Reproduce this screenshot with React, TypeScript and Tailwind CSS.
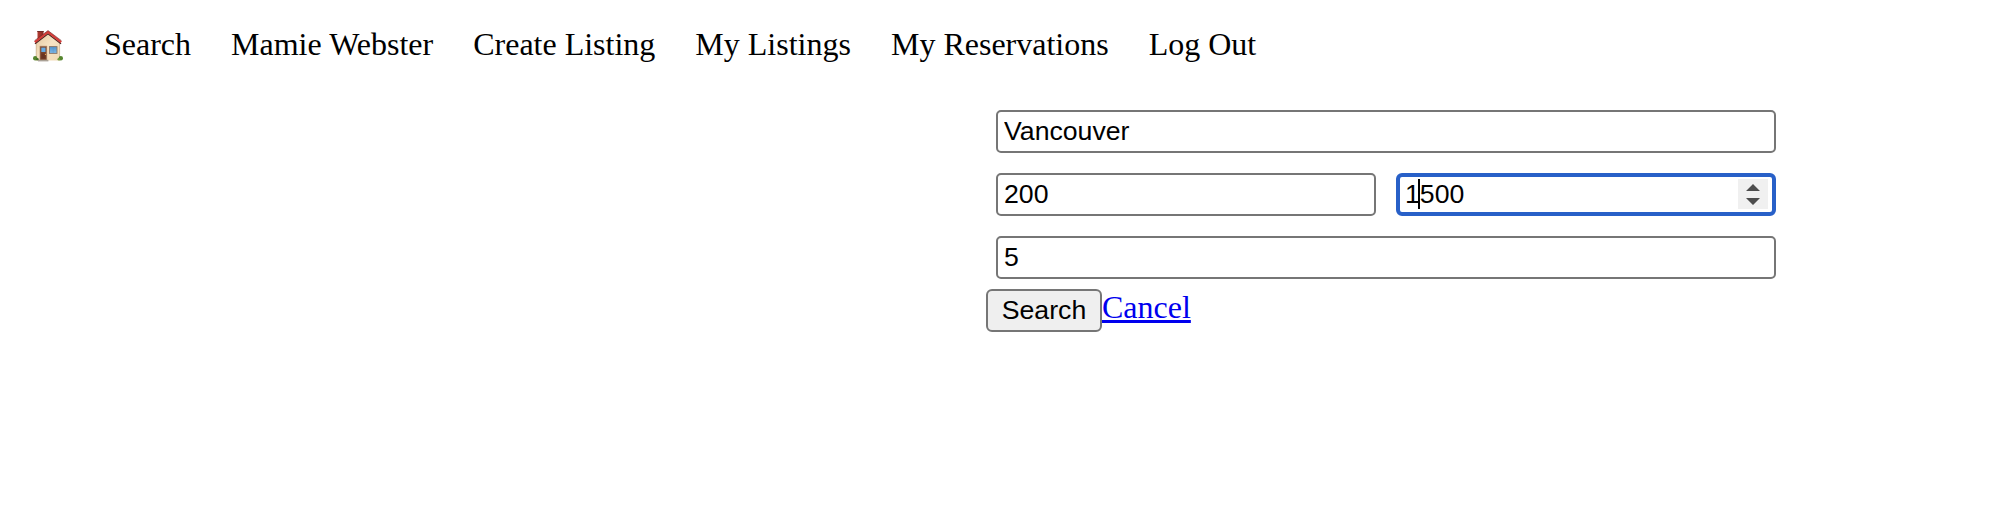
const navItems = [
  'Search',
  'Mamie Webster',
  'Create Listing',
  'My Listings',
  'My Reservations',
  'Log Out',
];

function HouseIcon() {
  return (
    <svg className="block h-9 w-8" viewBox="12 8 32 36" aria-label="Home">
      <defs>
        <linearGradient id="wall" x1="0" x2="1" y1="0" y2="1">
          <stop offset="0" stopColor="#e3c69c" />
          <stop offset="0.5" stopColor="#f7e3c4" />
          <stop offset="1" stopColor="#f0d9b4" />
        </linearGradient>
        <linearGradient id="brick" x1="0" x2="1">
          <stop offset="0" stopColor="#b53b31" />
          <stop offset="1" stopColor="#842a24" />
        </linearGradient>
        <linearGradient id="glass" x1="0" x2="0" y1="0" y2="1">
          <stop offset="0" stopColor="#4f93cf" />
          <stop offset="1" stopColor="#7fb9e6" />
        </linearGradient>
      </defs>
      <rect x="17.5" y="11" width="6" height="9.5" fill="url(#brick)" />
      <rect x="17.3" y="11" width="6.4" height="1" fill="#6d2a26" />
      <path d="M16 22 28 13 39.8 22v18.6H16z" fill="url(#wall)" />
      <path d="M16.2 23v17.6M39.6 23v17.6" stroke="#bfa381" strokeWidth=".6" />
      <path d="M15 23.8 28 13.8 41 23.8" fill="none" stroke="#4a2522" strokeWidth="1.3" />
      <path d="M14.8 22.2 28 12 41.2 22.2" fill="none" stroke="#d63c38" strokeWidth="2.2" />
      <path d="M14.6 20.6 28 10.6 41.4 20.6" fill="none" stroke="#6b2a28" strokeWidth=".6" />
      <circle cx="15.2" cy="38.2" r="2.2" fill="#56862f" />
      <circle cx="17.4" cy="39.2" r="1.3" fill="#3f6d22" />
      <circle cx="40.8" cy="38.2" r="2.2" fill="#56862f" />
      <circle cx="38.8" cy="39.2" r="1.3" fill="#6f9d3d" />
      <rect x="20" y="26.2" width="6.8" height="13.8" fill="#79432c" stroke="#a98260" strokeWidth=".7" />
      <rect x="21.3" y="27.6" width="4.2" height="4.4" fill="#62abe6" />
      <rect x="21.4" y="33.6" width="4" height="5" fill="#6a3522" />
      <circle cx="25.5" cy="34.4" r=".7" fill="#e3a44d" />
      <rect x="29.4" y="26.6" width="7.6" height="6.8" fill="url(#glass)" stroke="#8b7564" strokeWidth=".9" />
      <path d="M33.2 27v6" stroke="#5b91ba" strokeWidth=".4" />
      <rect x="18" y="39.8" width="10.4" height="1.6" fill="#aaa196" />
    </svg>
  );
}

const field =
  'block h-[43px] w-full min-w-0 rounded-[5px] border-2 border-[#767676] bg-white px-[6px] text-[26.667px] leading-[30px] text-black outline-none';

export default function App() {
  return (
    <div className="min-h-[514px] bg-white font-['Liberation_Serif',serif] text-[32px] leading-9 text-black">
      <nav className="flex h-[110px] items-start gap-10 pl-8 pt-[26px]">
        <a href="#" className="mt-[2px]">
          <HouseIcon />
        </a>
        {navItems.map((item) => (
          <a key={item} href="#" className="whitespace-nowrap">
            {item}
          </a>
        ))}
      </nav>
      <form className="ml-[986px] w-[800px]">
        <div className="flex flex-col gap-5 px-[10px] font-['Liberation_Sans',sans-serif]">
          <input className={field} defaultValue="Vancouver" />
          <div className="grid grid-cols-2 gap-5">
            <input className={field} defaultValue="200" />
            <div className="relative flex h-[43px] items-center justify-between rounded-[6px] border-4 border-[#2860c8] bg-white pl-[5px] pr-2 text-[26.667px] leading-[30px]">
              <span className="pb-[2px]">1500</span>
              <span className="absolute left-[18px] top-[2px] h-[30px] w-[2px] bg-black" />
              <svg className="-mt-px mr-[-4px] h-[30px] w-[30px] bg-[#f0f0f0]" viewBox="0 0 30 30">
                <path d="M8 12 15 5l7 7zM8 19h14l-7 7z" fill="#4d4d4d" />
              </svg>
            </div>
          </div>
          <input className={field} defaultValue="5" />
        </div>
        <div className="mt-[10px] flex items-start">
          <button
            type="button"
            className="flex h-[43px] w-[116px] items-center justify-center rounded-[6px] border-2 border-[#767676] bg-[#efefef] pb-[2px] font-['Liberation_Sans',sans-serif] text-[26.667px] leading-[30px]"
          >
            Search
          </button>
          <a href="#" className="text-[#0000ee] underline decoration-[3px] underline-offset-[2px]">
            Cancel
          </a>
        </div>
      </form>
    </div>
  );
}
